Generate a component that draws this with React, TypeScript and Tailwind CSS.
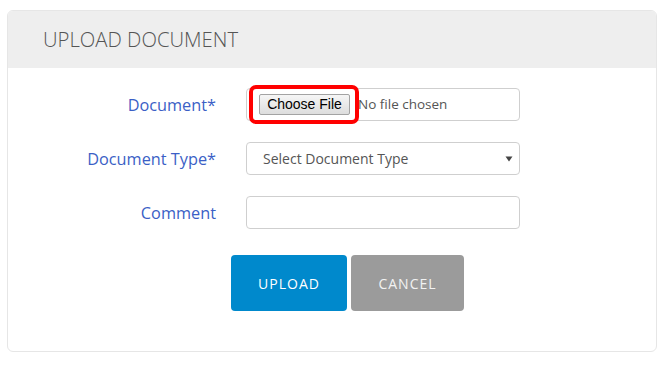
import React from "react";

export default function App() {
  const font = { fontFamily: '"Open Sans", "Liberation Sans", sans-serif' };
  return (
    <div className="w-[670px] h-[367px] bg-white pt-[10px] pl-[7px]" style={font}>
      <div className="w-[650px] h-[342px] rounded-[6px] border border-[#e6e6e6] overflow-hidden bg-white flex flex-col">
        <div className="h-[57px] bg-[#eeeeee] flex items-center pl-[35px]">
          <span className="text-[20.3px] font-light text-[#555] leading-none">UPLOAD DOCUMENT</span>
        </div>
        <div className="pt-[20px] flex flex-col gap-[21px]">
          <div className="flex items-center">
            <div className="w-[208px] text-right text-[16.3px] text-[#3b5fc6] pt-[1px]">Document*</div>
            <div className="ml-[30px] relative w-[274px] h-[33px] border border-[#cfcfcf] rounded-[4px] flex items-center">
              <div
                className="ml-[12px] w-[91px] h-[21px] border border-[#a3a3a3] rounded-[2px] bg-gradient-to-b from-[#f6f6f6] to-[#dddddd] flex items-center justify-center text-[14px] text-black"
                style={{ fontFamily: '"Liberation Sans", Arial, sans-serif' }}
              >
                Choose File
              </div>
              <span className="ml-[8px] text-[13.5px] text-[#555]">No file chosen</span>
              <div className="absolute left-[2px] top-[-4px] w-[110px] h-[39px] border-[4px] border-[#ff0000] rounded-[7px]" />
            </div>
          </div>
          <div className="flex items-center">
            <div className="w-[208px] text-right text-[16.3px] text-[#3b5fc6] pt-[1px]">Document Type*</div>
            <div className="ml-[30px] w-[274px] h-[33px] border border-[#cfcfcf] rounded-[4px] flex items-center justify-between pl-[16px] pr-[6px]">
              <span className="text-[14px] text-[#555]">Select Document Type</span>
              <svg width="8" height="6" viewBox="0 0 8 6">
                <path d="M0.5 0.5 L7.5 0.5 L4 5.5 Z" fill="#444" />
              </svg>
            </div>
          </div>
          <div className="flex items-center">
            <div className="w-[208px] text-right text-[16.3px] text-[#3b5fc6] pt-[1px]">Comment</div>
            <div className="ml-[30px] w-[274px] h-[33px] border border-[#cfcfcf] rounded-[4px]" />
          </div>
        </div>
        <div className="mt-[26px] pl-[223px] flex gap-[4px]">
          <div className="w-[116px] h-[56px] rounded-[4px] bg-[#0089cc] flex items-center justify-center text-white text-[14px] tracking-[1px]">
            UPLOAD
          </div>
          <div className="w-[113px] h-[56px] rounded-[4px] bg-[#9b9b9b] flex items-center justify-center text-[#f2f2f2] text-[14px] tracking-[1px]">
            CANCEL
          </div>
        </div>
      </div>
    </div>
  );
}
